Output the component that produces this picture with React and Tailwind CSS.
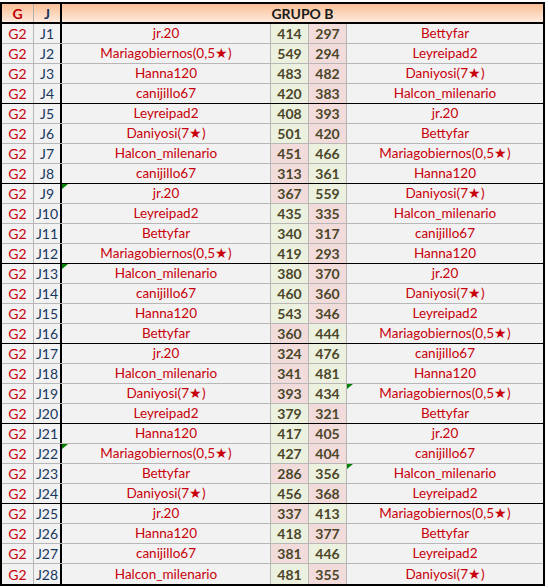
const rows = [
  ['jr.20', 414, 297, 'Bettyfar'],
  ['Mariagobiernos(0,5★)', 549, 294, 'Leyreipad2'],
  ['Hanna120', 483, 482, 'Daniyosi(7★)'],
  ['canijillo67', 420, 383, 'Halcon_milenario'],
  ['Leyreipad2', 408, 393, 'jr.20'],
  ['Daniyosi(7★)', 501, 420, 'Bettyfar'],
  ['Halcon_milenario', 451, 466, 'Mariagobiernos(0,5★)'],
  ['canijillo67', 313, 361, 'Hanna120'],
  ['jr.20', 367, 559, 'Daniyosi(7★)', 'l'],
  ['Leyreipad2', 435, 335, 'Halcon_milenario'],
  ['Bettyfar', 340, 317, 'canijillo67'],
  ['Mariagobiernos(0,5★)', 419, 293, 'Hanna120'],
  ['Halcon_milenario', 380, 370, 'jr.20', 'l'],
  ['canijillo67', 460, 360, 'Daniyosi(7★)'],
  ['Hanna120', 543, 346, 'Leyreipad2'],
  ['Bettyfar', 360, 444, 'Mariagobiernos(0,5★)'],
  ['jr.20', 324, 476, 'canijillo67'],
  ['Halcon_milenario', 341, 481, 'Hanna120'],
  ['Daniyosi(7★)', 393, 434, 'Mariagobiernos(0,5★)', 'r'],
  ['Leyreipad2', 379, 321, 'Bettyfar'],
  ['Hanna120', 417, 405, 'jr.20'],
  ['Mariagobiernos(0,5★)', 427, 404, 'canijillo67', 'l'],
  ['Bettyfar', 286, 356, 'Halcon_milenario', 'r'],
  ['Daniyosi(7★)', 456, 368, 'Leyreipad2'],
  ['jr.20', 337, 413, 'Mariagobiernos(0,5★)'],
  ['Hanna120', 418, 377, 'Bettyfar'],
  ['canijillo67', 381, 446, 'Leyreipad2'],
  ['Halcon_milenario', 481, 355, 'Daniyosi(7★)'],
];

// little green comment flag in the top-left corner of a cell
const Flag = () => (
  <span className="absolute left-0 top-0 h-0 w-0 border-t-[5px] border-r-[6px] border-t-[#008000] border-r-transparent" />
);

const App = () => {
  return (
    <div className="bg-white min-h-[588px] pt-[2px] font-['Lato','Liberation_Sans',sans-serif] text-[14px] leading-none">
      <div className="w-[545px] border-2 border-black bg-[#f2f2f2]">
        <div className="grid grid-cols-[32px_28px_209px_38px_38px_196px] h-[20px] border-b-2 border-black bg-gradient-to-b from-[#f9bf95] to-[#fdeadd]">
          <div className="flex items-center justify-center pt-px border-r border-[#b0b0b0] font-bold text-[#c00000]">G</div>
          <div className="flex items-center justify-center pt-px border-r-2 border-black font-bold text-[#17375e]">J</div>
          <div className="col-span-4 flex items-center justify-center pt-px font-bold text-[#1a1a1a]">GRUPO B</div>
        </div>
        {rows.map(([a, s1, s2, b, flag], i) => {
          const last = i === rows.length - 1;
          const groupEnd = (i + 1) % 4 === 0 && !last;
          const line = last ? '' : groupEnd ? 'border-b border-black' : 'border-b border-[#b7b7b7]';
          return (
            <div key={i} className={`grid grid-cols-[32px_28px_209px_38px_38px_196px] h-[20px] ${line}`}>
              <div className="flex items-center justify-center pt-px border-r border-[#b7b7b7] text-[#c8000a]">G2</div>
              <div className="flex items-center justify-center pt-px border-r-2 border-black text-[#17375e]">J{i + 1}</div>
              <div className="relative flex items-center justify-center pt-px border-r border-[#b7b7b7] text-[13.5px] text-[#c8000a]">
                {flag === 'l' && <Flag />}
                {a}
              </div>
              <div className={`flex items-center justify-center pt-px border-r border-[#b7b7b7] font-bold text-[#4a4528] ${s1 > s2 ? 'bg-[#ebf1de]' : 'bg-[#f2dcdb]'}`}>{s1}</div>
              <div className={`flex items-center justify-center pt-px border-r border-[#b7b7b7] font-bold text-[#4a4528] ${s2 > s1 ? 'bg-[#ebf1de]' : 'bg-[#f2dcdb]'}`}>{s2}</div>
              <div className="relative flex items-center justify-center pt-px text-[13.5px] text-[#c8000a]">
                {flag === 'r' && <Flag />}
                {b}
              </div>
            </div>
          );
        })}
      </div>
    </div>
  );
};

export default App;
